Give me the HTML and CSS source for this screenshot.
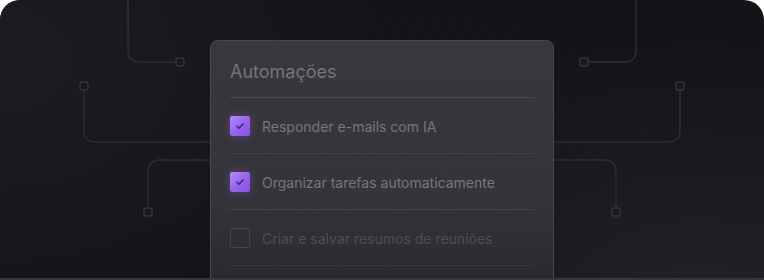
FILE: index.html
```html
<!DOCTYPE html>
<html lang="pt">
	<head>
		<meta charset="UTF-8" />
		<meta name="viewport" content="width=device-width, initial-scale=1.0" />
		<title>Automações</title>
		<link rel="stylesheet" href="styles.css">
	</head>
	<body>
		<div id="stage">
			<!-- circuit lines behind the card -->
			<svg class="circuit" width="764" height="278" viewBox="0 0 764 278">
				<g fill="none" stroke="#2d2c33" stroke-width="1.5">
					<path d="M128 0 V50 Q128 62 140 62 H176" />
					<path d="M84 90 V130 Q84 142 96 142 H212" />
					<path d="M212 160 H160 Q148 160 148 172 V208" />
					<path d="M636 0 V50 Q636 62 624 62 H588" />
					<path d="M680 90 V130 Q680 142 668 142 H552" />
					<path d="M552 160 H604 Q616 160 616 172 V208" />
				</g>
				<g fill="#19181d" stroke="#34333a" stroke-width="1.5">
					<rect x="176" y="58" width="8" height="8" rx="2" />
					<rect x="80" y="82" width="8" height="8" rx="2" />
					<rect x="144" y="208" width="8" height="8" rx="2" />
					<rect x="580" y="58" width="8" height="8" rx="2" />
					<rect x="676" y="82" width="8" height="8" rx="2" />
					<rect x="612" y="208" width="8" height="8" rx="2" />
				</g>
			</svg>

			<div class="card">
				<h2 class="card-title">Automações</h2>
				<ul class="tasks">
					<li class="task">
						<span class="check on">
							<svg width="10" height="8" viewBox="0 0 10 8"><path d="M2 4.3 L4 6.2 L8.2 1.8" fill="none" stroke="#3a2766" stroke-width="1.5" stroke-linecap="round" stroke-linejoin="round" /></svg>
						</span>
						<span class="label">Responder e-mails com IA</span>
					</li>
					<li class="task">
						<span class="check on">
							<svg width="10" height="8" viewBox="0 0 10 8"><path d="M2 4.3 L4 6.2 L8.2 1.8" fill="none" stroke="#3a2766" stroke-width="1.5" stroke-linecap="round" stroke-linejoin="round" /></svg>
						</span>
						<span class="label">Organizar tarefas automaticamente</span>
					</li>
					<li class="task off">
						<span class="check"></span>
						<span class="label">Criar e salvar resumos de reuniões</span>
					</li>
				</ul>
			</div>
		</div>
	</body>
</html>
```

FILE: styles.css
```css
html {
	background: #ffffff;
}
body {
	margin: 0;
	font-family: Inter, "Noto Sans", sans-serif;
}
#stage {
	position: relative;
	height: 278px;
	overflow: hidden;
	border-radius: 20px 20px 0 0;
	border-bottom: 2px solid #38383c;
	background:
		radial-gradient(ellipse 420px 260px at 700px 300px, #222128 0%, rgba(34, 33, 40, 0) 100%),
		radial-gradient(ellipse 380px 280px at 0 60px, #1d1c22 0%, rgba(29, 28, 34, 0) 100%),
		#141317;
}
/* faint diagonal hatching around the card */
#stage::before {
	content: "";
	position: absolute;
	inset: 0;
	background: repeating-linear-gradient(65deg, rgba(255, 255, 255, 0) 0 13px, rgba(255, 255, 255, 0.03) 13px 14px);
	-webkit-mask-image: radial-gradient(ellipse 300px 170px at 382px 150px, #000 35%, transparent 100%);
	mask-image: radial-gradient(ellipse 300px 170px at 382px 150px, #000 35%, transparent 100%);
}
.circuit {
	position: absolute;
	left: 0;
	top: 0;
}
.card {
	position: relative;
	width: 344px;
	box-sizing: border-box;
	margin: 40px auto 0;
	padding: 19px 19px 0;
	height: 260px;
	border: 1px solid #48474e;
	border-bottom: none;
	border-radius: 8px 8px 0 0;
	background:
		repeating-linear-gradient(60deg, rgba(255, 255, 255, 0.012) 0 1px, rgba(0, 0, 0, 0) 1px 3px),
		linear-gradient(180deg, #38373e 0%, #34333a 60%, #2b2a30 88%, #232228 100%);
}
.card-title {
	margin: 0 0 13px;
	font-size: 18px;
	line-height: 24px;
	font-weight: 400;
	color: #75747b;
}
.tasks {
	list-style: none;
	margin: 0;
	padding: 0;
	border-top: 1px solid #4a4950;
}
.task {
	display: flex;
	align-items: center;
	gap: 12px;
	height: 55px;
	border-bottom: 1px solid #44434a;
	font-size: 14px;
	color: #77767d;
}
.label {
	padding-top: 1px;
}
.task.off {
	color: #4f4e55;
	border-bottom-color: #37363c;
}
.check {
	display: flex;
	align-items: center;
	justify-content: center;
	width: 20px;
	height: 20px;
	box-sizing: border-box;
	border-radius: 2px;
	border: 1.5px solid #45444b;
}
.check.on {
	border: none;
	background: linear-gradient(135deg, #b48cf8 0%, #9a68f0 45%, #8650e6 100%);
	box-shadow: 0 0 8px rgba(160, 110, 250, 0.35);
}
```
